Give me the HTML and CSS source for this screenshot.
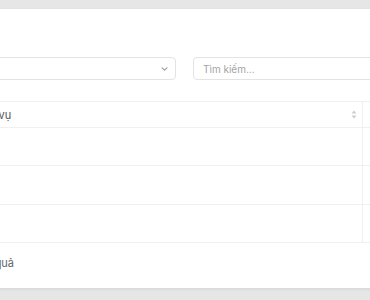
FILE: index.html
```html
<!DOCTYPE html>
<html lang="vi">
<head>
    <meta charset="UTF-8">
    <meta name="viewport" content="width=device-width, initial-scale=1.0">
    <title>Dịch vụ</title>
    <link rel="stylesheet" href="styles.css">
</head>
<body>
    <div class="card">
        <div class="filters">
            <div class="select">
                <span class="select-value">Tất cả danh mục</span>
                <svg class="chevron" width="7" height="4" viewBox="0 0 7 4"><path d="M1 0.8l2.5 2.4 2.5-2.4" fill="none" stroke="#9a9a9a" stroke-width="1.1" stroke-linecap="round" stroke-linejoin="round"/></svg>
            </div>
            <input class="search" type="text" placeholder="Tìm kiếm...">
        </div>

        <table class="table">
            <colgroup>
                <col class="col-no">
                <col class="col-name">
                <col class="col-rest">
            </colgroup>
            <thead>
                <tr>
                    <th>STT</th>
                    <th class="sep">
                        <div class="th-inner">
                            <span>Tên dịch vụ</span>
                            <span class="sorter">
                                <svg width="6" height="9" viewBox="0 0 6 9"><path d="M3 0.5L5.5 3.5H0.5Z" fill="#cccccc"/><path d="M3 8.5L5.5 5.5H0.5Z" fill="#cccccc"/></svg>
                            </span>
                        </div>
                    </th>
                    <th>Giá</th>
                </tr>
            </thead>
            <tbody>
                <tr><td></td><td class="sep"></td><td></td></tr>
                <tr><td></td><td class="sep"></td><td></td></tr>
                <tr><td></td><td class="sep"></td><td></td></tr>
            </tbody>
        </table>

        <div class="footer">Hiển thị 0 kết quả</div>
    </div>
</body>
</html>
```

FILE: styles.css
```css
body {
    margin: 0;
    background: #e6e6e6;
    font-family: Inter, "Noto Sans", sans-serif;
    overflow: hidden;
    height: 300px;
}

.card {
    background: #fff;
    margin: 9px 0 0 -150px;
    width: 669px;
    padding: 48px 16px 0;
    box-sizing: border-box;
    height: 279px;
    box-shadow: 0 1px 3px rgba(0, 0, 0, 0.08);
}

.filters {
    display: grid;
    grid-template-columns: 310px 310px;
    gap: 17px;
}

.select,
.search {
    height: 23px;
    box-sizing: border-box;
    border: 1px solid #e3e3e3;
    border-radius: 4px;
    background: #fff;
}

.select {
    display: flex;
    align-items: center;
    justify-content: space-between;
    padding: 0 7px 0 10px;
    font-size: 11px;
    color: #555;
}

.chevron {
    display: block;
}

.search {
    padding: 0 9px;
    font-family: inherit;
    font-size: 10px;
    color: #555;
    outline: none;
}

.search::placeholder {
    color: #a3a3a3;
}

.table {
    margin-top: 21px;
    width: 637px;
    border-collapse: collapse;
    table-layout: fixed;
}

.col-no {
    width: 73px;
}

.col-name {
    width: 423px;
}

.table th,
.table td {
    border-top: 1px solid #f0f0f0;
    border-bottom: 1px solid #f0f0f0;
    padding: 0 12px;
    text-align: left;
}

.table th {
    height: 25px;
    font-size: 11px;
    font-weight: 400;
    color: #555;
}

.table td {
    height: 37.4px;
}

.table .sep {
    border-right: 1px solid #f0f0f0;
    padding-right: 5px;
}

.th-inner {
    display: flex;
    align-items: center;
    justify-content: space-between;
}

.sorter svg {
    display: block;
}

.footer {
    padding-top: 13px;
    padding-left: 57px;
    font-size: 11px;
    color: #666;
}
```
